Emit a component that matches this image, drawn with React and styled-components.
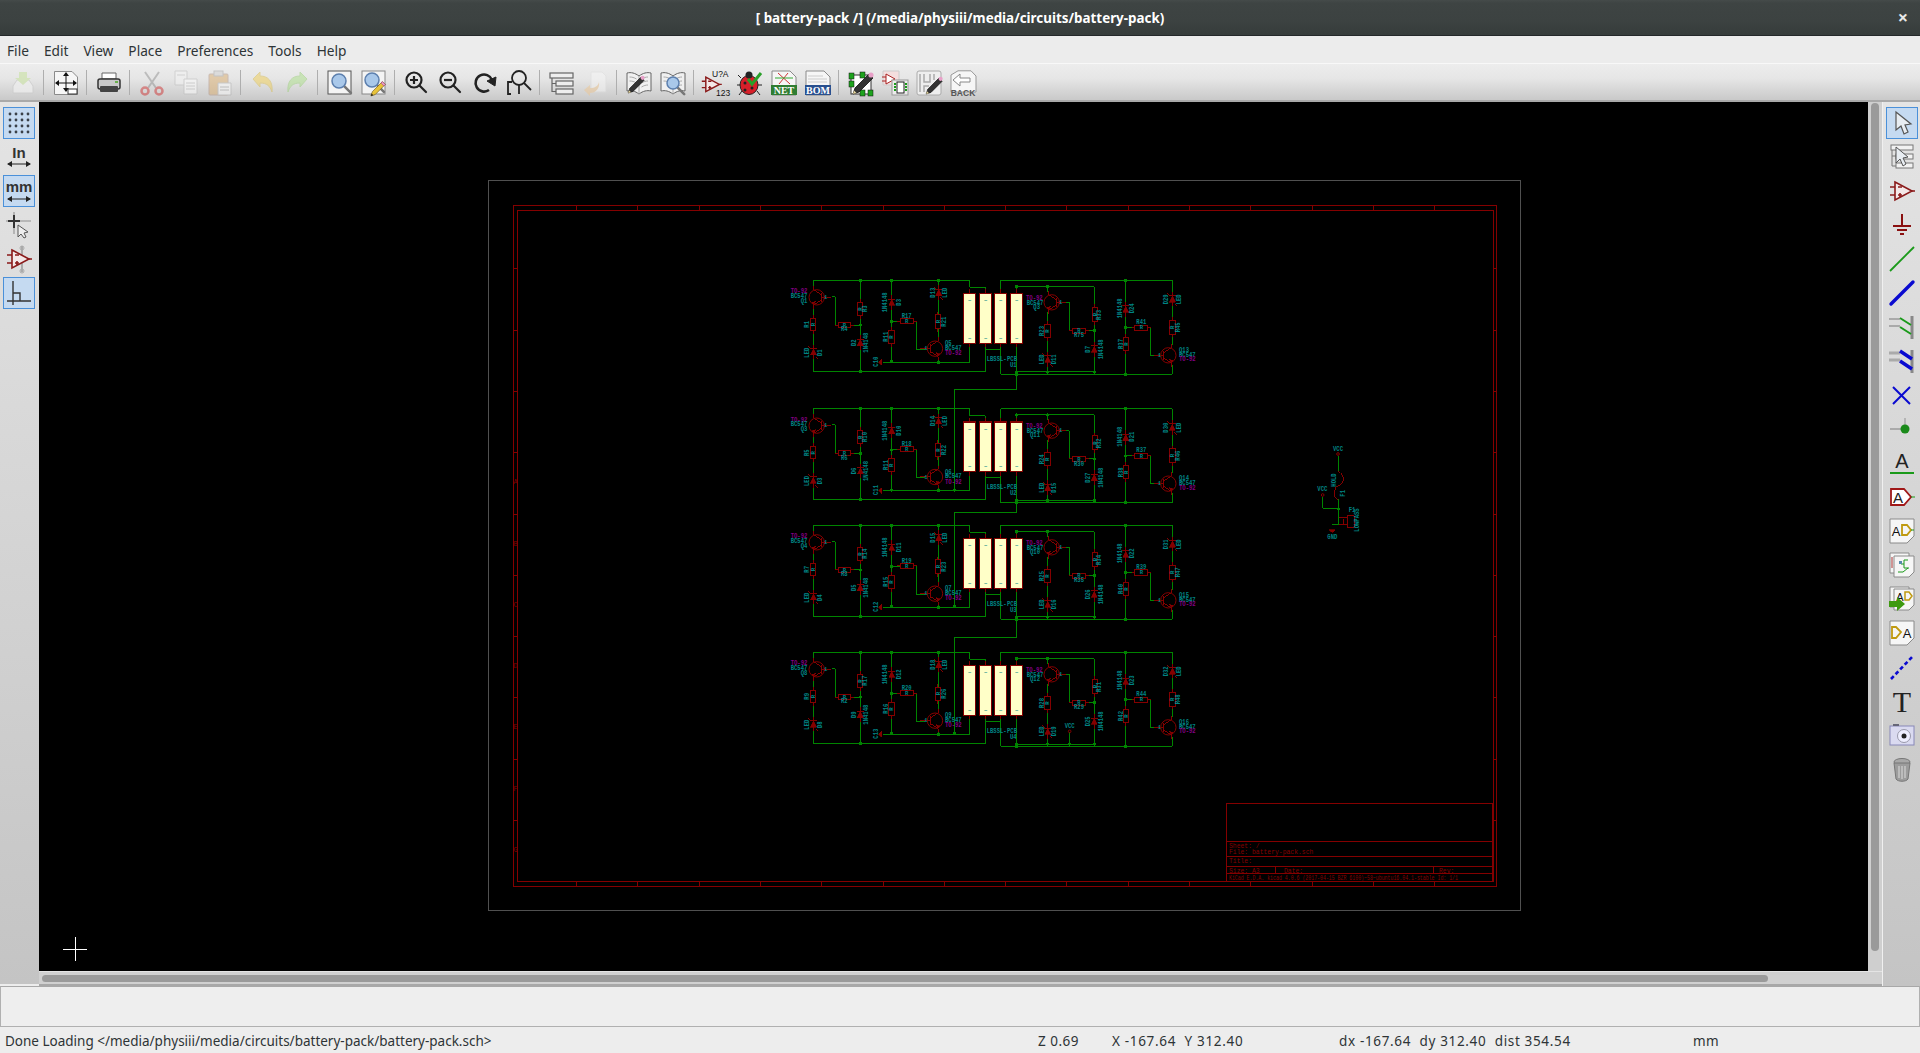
import React from 'react';
import styled, { createGlobalStyle } from 'styled-components';

const Global = createGlobalStyle`
  html, body { margin: 0; padding: 0; background: #ececec; }
  #root { width: 1920px; height: 1053px; overflow: hidden; }
`;

const Win = styled.div`
  width: 1920px; height: 1053px; display: flex; flex-direction: column;
  font-family: "Noto Sans", "Open Sans", sans-serif; color: #2e3436; background: #ededed;
`;
const TitleBar = styled.header`
  height: 36px; flex: none; display: flex; align-items: center; justify-content: center; position: relative;
  background: linear-gradient(#454b4a 0, #3e4443 3px, #3c4241 60%, #363c3b 100%);
  border-bottom: 1px solid #24282a; box-sizing: border-box;
  color: #fff; font-weight: 700; font-size: 13.4px;
`;
const CloseX = styled.span`
  position: absolute; right: 12px; top: 8px; font-size: 18px; line-height: 18px; color: #e8e8e8; font-weight: 700;
`;
const MenuBar = styled.nav`
  height: 27px; flex: none; display: flex; align-items: center; gap: 15px; background: #ececec; font-size: 13.7px; padding: 1px 0 0 7px; box-sizing: border-box;
`;
const MenuItem = styled.span``;
const Toolbar = styled.div`
  height: 39px; flex: none; box-sizing: border-box; display: flex; align-items: center; padding: 1px 0 0 6px;
  border-top: 1px solid #f8f8f8; border-bottom: 2px solid #a9a9a9;
  background: linear-gradient(#ededed, #e6e6e6 40%, #c9c9c9);
`;
const ToolBtn = styled.span`
  width: 26px; height: 26px; margin: 0 4px; flex: none; display: block;
`;
const Sep = styled.span`
  width: 1px; height: 25px; margin: 0 5px 0 3px; background: #aeaeae; flex: none;
`;
const Ico = styled.svg`
  display: block; width: 26px; height: 26px; overflow: visible;
  font-family: "Liberation Sans", sans-serif;
`;
const Main = styled.div`
  flex: none; height: 884px; display: flex;
`;
const SideBar = styled.aside`
  width: ${p => p.$w}px; flex: none; box-sizing: border-box; padding: 5px 0 0 3px;
  display: flex; flex-direction: column; gap: 2px;
  background: linear-gradient(#e4e4e4, #c4c4c4);
  border-left: ${p => p.$right ? '1px solid #f0f0f0' : '0'};
  margin-bottom: ${p => p.$right ? 0 : 2}px;
`;
const SideBtn = styled.span`
  width: 32px; height: 32px; flex: none; box-sizing: border-box; display: flex; align-items: center; justify-content: center;
  border: 1px solid ${p => p.$on ? '#4a90d9' : 'transparent'};
  background: ${p => p.$on ? '#c5daf1' : 'transparent'};
`;
const Center = styled.div`
  flex: 1; min-width: 0; display: flex; flex-direction: column;
`;
const CanvasRow = styled.div`
  flex: 1; min-height: 0; display: flex;
`;
const Canvas = styled.svg`
  flex: 1; min-width: 0; height: 869px; display: block; background: #000;
  font-family: "Liberation Mono", monospace;
`;
const VTrack = styled.div`
  width: 14px; flex: none; box-sizing: border-box; background: #cfcfcf; padding: 1px 3px 20px 3px;
`;
const VThumb = styled.div`
  width: 8px; height: 848px; border-radius: 4px; background: #9a9a9a;
`;
const HTrack = styled.div`
  height: 15px; flex: none; box-sizing: border-box; background: #d0d0d0; padding: 3px 0 0 3px;
  border-top: 1px solid #e4e4e4; border-bottom: 2px solid #a8a8a8;
`;
const HThumb = styled.div`
  width: 1726px; height: 7px; border-radius: 4px; background: #9a9a9a;
`;
const MsgPanel = styled.div`
  height: 41px; flex: none; box-sizing: border-box; background: #eeeeee; border: 1px solid #b0b0b0; border-top-color: #a8a8a8;
`;
const StatusBar = styled.footer`
  flex: none; height: 26px; display: flex; align-items: center; font-size: 13.5px; background: #ededed; color: #2e3436; padding: 1px 0 0 5px; box-sizing: border-box;
`;
const Cell = styled.span`
  width: ${p => p.$w}px; flex: none; white-space: pre; letter-spacing: ${p => p.$sp || 0}px;
`;

/* Schematic drawing parts */
const Wire = styled.path`fill: none; stroke: #008400; stroke-width: 3;`;
const Dot = styled.circle`fill: #008400;`;
const Red = styled.path`fill: none; stroke: #840000; stroke-width: 3;`;
const RedFill = styled.path`fill: #840000; stroke: #840000; stroke-width: 2;`;
const RedBox = styled.rect`fill: none; stroke: #840000; stroke-width: 3;`;
const RedRing = styled.circle`fill: none; stroke: #840000; stroke-width: 3; shape-rendering: geometricPrecision;`;
const Cell4 = styled.rect`fill: #ffffc8; stroke: #840000; stroke-width: 4;`;
const Lbl = styled.text`
  fill: ${p => p.$c || '#008484'}; font-size: ${p => p.$s || 19}px; font-weight: 700;
`;
const Frame = styled.rect`fill: none; stroke: ${p => p.$c}; stroke-width: 1; shape-rendering: crispEdges;`;
const Hair = styled.path`fill: none; stroke: ${p => p.$c || '#840000'}; stroke-width: 1; shape-rendering: crispEdges;`;
const Sheet = styled.text`fill: #840000; font-size: 6.4px; font-family: "Liberation Mono", monospace;`;

const T = ({ x, y, r, a, c, s, children }) => {
  const n = String(children).length;
  return (
    <Lbl x={x} y={y} $c={c} $s={s} textAnchor={a || (r ? 'middle' : 'start')} textLength={n * 10} lengthAdjust="spacingAndGlyphs"
      transform={r ? `rotate(-90 ${x} ${y})` : undefined}>{children}</Lbl>
  );
};
const ResV = ({ x, y, l = 40 }) => (
  <g>
    <RedBox x={x - 8} y={y} width={16} height={l} />
    <Red d={`M${x} ${y - 10}V${y}M${x} ${y + l}V${y + l + 10}`} />
    <T x={x + 5} y={y + l / 2} r s={15}>R</T>
  </g>
);
const ResH = ({ x, y, l = 40 }) => (
  <g>
    <RedBox x={x} y={y - 8} width={l} height={16} />
    <Red d={`M${x - 10} ${y}H${x}M${x + l} ${y}H${x + l + 10}`} />
    <T x={x + l / 2} y={y + 5} a="middle" s={15}>R</T>
  </g>
);
const Dio = ({ x, y, led }) => (
  <g>
    <RedFill d={`M${x - 9} ${y + 9}L${x} ${y - 9}L${x + 9} ${y + 9}Z`} />
    <Red d={`M${x - 10} ${y - 10}H${x + 10}M${x} ${y - 22}V${y + 22}`} />
    {led && <Red d={`M${x - 16} ${y - 18}L${x - 8} ${y - 10}M${x + 6} ${y + 14}L${x + 14} ${y + 22}`} />}
  </g>
);
const Qt = ({ cx, cy, d }) => (
  <g>
    <RedRing cx={cx} cy={cy} r={23} />
    <Red d={`M${cx + 14 * d} ${cy - 14}V${cy + 14}M${cx + 14 * d} ${cy - 8}L${cx - 10 * d} ${cy - 24}V${cy - 34}M${cx + 14 * d} ${cy + 8}L${cx - 10 * d} ${cy + 24}V${cy + 34}M${cx + 14 * d} ${cy}H${cx + 44 * d}`} />
    <RedFill d={`M${cx - 3 * d} ${cy + 12}l${-6 * d} 10l${-5 * d} -6Z`} />
    <T x={cx + 27 * d} y={cy + 5} a="middle" s={15}>1</T>
  </g>
);

const CELLS = [551, 599, 644, 692];
const JUNCTIONS = [[241, 31], [241, 165], [241, 304], [335, 31], [335, 155], [335, 275], [476, 31], [476, 277], [710, 50], [803, 50], [943, 182], [710, 306], [803, 306], [943, 306], [710, 313], [1037, 31], [1037, 173], [1037, 313]];
const WIRES = 'M100 31H569V52H616V70M100 31V58M100 110V145M100 182V225M100 268V304H617V238H662V220M662 238V313H1177M155 80H166V165H175M212 165H241M241 31V97M241 137V200M241 236V304M335 31V85M335 108V181M335 221V275M335 155H360M400 153H409V238H435M308 277H569V220M476 31V55M476 85V135M476 175V205M476 262V277M616 220V238M662 70V31H1177M710 70V50H943V113M943 155V220M943 256V306M803 50V65M803 125V163M803 203V245M803 290V306M840 97H868V182H877M917 182H943M710 220V313M710 306H943M1037 31V100M1037 136V202M1037 242V313M1037 173H1065M1103 173H1111V256H1137M1177 31V70M1177 105V152M1177 192V225M1177 285V313';

const ROWS = [
  { dy: 0, a: ['Q1', 'R1', 'D1', 'R4', 'R3', 'D2', 'D3', 'R11', 'R17', 'C10', 'D13', 'R21', 'Q5', 'U1', 'Q3', 'R23', 'D11', 'R33', 'R75', 'D7', 'D24', 'R41', 'R37', 'D29', 'R45', 'Q13'], link: null },
  { dy: 385, a: ['Q3', 'R5', 'D3', 'R6', 'R10', 'D6', 'D10', 'R11', 'R18', 'C11', 'D14', 'R22', 'Q6', 'U2', 'Q11', 'R24', 'D15', 'R32', 'R30', 'D27', 'D21', 'R37', 'R38', 'D30', 'R46', 'Q14'], link: -72, ly: -25 },
  { dy: 735, a: ['Q4', 'R7', 'D4', 'R8', 'R14', 'D5', 'D11', 'R15', 'R19', 'C12', 'D15', 'R23', 'Q7', 'U3', 'Q10', 'R25', 'D16', 'R34', 'R35', 'D26', 'D22', 'R39', 'R40', 'D31', 'R47', 'Q15'], link: -38, ly: -9 },
  { dy: 1116, a: ['Q8', 'R9', 'D8', 'R2', 'R17', 'D9', 'D12', 'R16', 'R20', 'C13', 'D18', 'R26', 'Q9', 'U4', 'Q12', 'R28', 'D19', 'R31', 'R29', 'D25', 'D23', 'R44', 'R42', 'D32', 'R48', 'Q16'], link: -68, ly: -14 },
];

const SchRow = ({ row, last }) => {
  const a = row.a;
  return (
    <g transform={`translate(0 ${row.dy})`} shapeRendering="crispEdges">
      {row.link !== null && <Wire d={`M710 ${row.link}V${row.ly}H523V275`} />}
      <Wire d={WIRES} />
      {JUNCTIONS.map(([x, y]) => <Dot key={`${x}-${y}`} cx={x} cy={y} r={5} />)}
      {row.link !== null && <Dot cx={523} cy={275} r={5} />}
      {last && <>
        <Wire d="M869 269V306" /><Dot cx={869} cy={306} r={5} />
        <RedRing cx={869} cy={268} r={4} />
        <T x={869} y={258} a="middle">VCC</T>
      </>}
      <Qt cx={110} cy={82} d={1} />
      <Qt cx={465} cy={236} d={-1} />
      <Qt cx={815} cy={97} d={1} />
      <Qt cx={1165} cy={256} d={-1} />
      <ResV x={100} y={145} l={37} /><ResH x={175} y={165} l={37} /><ResV x={241} y={97} /><ResV x={335} y={181} /><ResH x={360} y={153} /><ResV x={474} y={135} />
      <ResV x={803} y={163} /><ResV x={945} y={113} l={42} /><ResH x={877} y={182} /><ResH x={1065} y={173} l={38} /><ResV x={1038} y={202} /><ResV x={1178} y={152} />
      <Dio x={100} y={246} led /><Dio x={241} y={218} /><Dio x={335} y={97} /><Dio x={476} y={68} led />
      <Dio x={803} y={268} led /><Dio x={943} y={238} /><Dio x={1037} y={118} /><Dio x={1177} y={87} led />
      <RedFill d="M305 268L296 277L305 286Z" />
      {CELLS.map(x => (
        <g key={x}>
          <Cell4 x={x} y={71} width={36} height={149} />
          <Red d={`M${x + 18} 58V70M${x + 18} 221V232`} />
          <T x={x + 18} y={97} a="middle" s={14}>~</T>
          <T x={x + 18} y={210} a="middle" s={14}>~</T>
        </g>
      ))}
      <T x={82} y={70} a="end" c="#840084">TO-92</T><T x={82} y={84} a="end">BC547</T><T x={82} y={98} a="end">{a[0]}</T>
      <T x={88} y={163} r>{a[1]}</T>
      <T x={88} y={248} r>LED</T><T x={127} y={248} r>{a[2]}</T>
      <T x={193} y={184} a="middle">{a[3]}</T>
      <T x={262} y={116} r>{a[4]}</T>
      <T x={228} y={218} r>{a[5]}</T><T x={265} y={218} r>1N4148</T>
      <T x={322} y={97} r>1N4148</T><T x={363} y={97} r>{a[6]}</T>
      <T x={323} y={200} r>{a[7]}</T>
      <T x={380} y={143} a="middle">{a[8]}</T>
      <T x={295} y={275} r>{a[9]}</T>
      <T x={464} y={68} r>{a[10]}</T><T x={500} y={68} r>LED</T>
      <T x={497} y={155} r>{a[11]}</T>
      <T x={495} y={226} a="start">{a[12]}</T><T x={495} y={240} a="start">BC547</T><T x={495} y={256} a="start" c="#840084">TO-92</T>
      <T x={620} y={272} a="start">LBSSL-</T><T x={681} y={272} a="start">PCB</T><T x={700} y={290} a="middle">{a[13]}</T>
      <T x={738} y={89} a="start" c="#840084">TO-92</T><T x={740} y={104} a="start">BC547</T><T x={780} y={117} a="end">{a[14]}</T>
      <T x={793} y={183} r>{a[15]}</T><T x={793} y={268} r>LED</T><T x={828} y={268} r>{a[16]}</T>
      <T x={964} y={135} r>{a[17]}</T><T x={897} y={202} a="middle">{a[18]}</T>
      <T x={930} y={238} r>{a[19]}</T><T x={968} y={238} r>1N4148</T>
      <T x={1026} y={115} r>1N4148</T><T x={1063} y={115} r>{a[20]}</T>
      <T x={1084} y={162} a="middle">{a[21]}</T><T x={1029} y={222} r>{a[22]}</T>
      <T x={1164} y={88} r>{a[23]}</T><T x={1202} y={88} r>LED</T><T x={1200} y={172} r>{a[24]}</T>
      <T x={1197} y={246} a="start">{a[25]}</T><T x={1197} y={260} a="start">BC547</T><T x={1197} y={274} a="start" c="#840084">TO-92</T>
    </g>
  );
};

const hTicks = Array.from({ length: 15 }, (_, i) => 576 + i * 61.3).filter(x => x < 1490);
const vTicks = Array.from({ length: 11 }, (_, i) => 820 - i * 61.3).filter(y => y > 210);

const Schematic = () => (
  <Canvas viewBox="39 102 1829 869" preserveAspectRatio="none">
    <Frame $c="#505050" x={488.5} y={180.5} width={1032} height={730} />
    <Frame $c="#840000" x={513.5} y={205.5} width={983} height={681} />
    <Frame $c="#840000" x={517.5} y={210.5} width={976} height={671} />
    <Hair d={hTicks.map(x => `M${Math.round(x)}.5 206V210M${Math.round(x)}.5 882V887`).join('')} />
    <Hair d={vTicks.map(y => `M514 ${Math.round(y)}.5H517M1493 ${Math.round(y)}.5H1497`).join('')} />
    {vTicks.slice(0, 7).map((y, i) => <Sheet key={i} x={513.5} y={y + 32} textLength={4} lengthAdjust="spacingAndGlyphs">{'GFEDCBA'[i] || ''}</Sheet>)}
    <Frame $c="#840000" x={1226.5} y={803.5} width={266} height={78} />
    <Hair d="M1226 841.5H1493M1226 856.5H1493M1226 866.5H1493M1226 873.5H1493M1275.5 866V874M1433.5 866V874" />
    <Sheet x={1229} y={848}>Sheet: /</Sheet>
    <Sheet x={1229} y={854}>File: battery-pack.sch</Sheet>
    <Sheet x={1229} y={863}>Title:</Sheet>
    <Sheet x={1229} y={872.5}>Size: A3</Sheet>
    <Sheet x={1284} y={872.5}>Date:</Sheet>
    <Sheet x={1439} y={872.5}>Rev:</Sheet>
    <Sheet x={1229} y={879.5} textLength={229} lengthAdjust="spacingAndGlyphs">KiCad E.D.A.  kicad 4.0.6 (2017-04-15 BZR 6100)~58~ubuntu16.04.1-stable  Id: 1/1</Sheet>

    <g transform="translate(780 270) scale(0.3333333)">
      {ROWS.map((r, i) => <SchRow key={i} row={r} last={i === 3} />)}
    </g>
    <g transform="translate(1300 430) scale(0.3333333)" shapeRendering="crispEdges">
      <Wire d="M114 77V125M114 208V285M68 200V235H116M97 285H130" />
      <Dot cx={116} cy={237} r={5} />
      <RedRing cx={114} cy={72} r={4} /><RedRing cx={68} cy={195} r={4} />
      <Red d="M114 125C135 130 135 165 114 168C98 172 98 205 114 208M130 268V285M116 262H142M116 285H142M142 258H163V292H142Z" />
      <RedFill d="M88 300H106L97 308Z" />
      <T x={114} y={62} a="middle">VCC</T><T x={67} y={184} a="middle">VCC</T><T x={97} y={326} a="middle">GND</T>
      <T x={108} y={150} r>HOLD</T><T x={134} y={190} r>F1</T><T x={156} y={245} a="middle">F1</T><T x={176} y={270} r>LOWPASS</T>
    </g>
    <Hair $c="#fff" d="M63 949.5H87M75.5 937V961" />
  </Canvas>
);

/* Icons */
const Page = ({ d = 'M1.5 1.5H19L24.5 7V24.5H1.5Z' }) => <path d={d} fill="#f6f6f6" stroke="#8a8a8a" />;
const Lens = ({ x, y, r = 6 }) => (
  <g>
    <path d={`M${x + r * 0.7} ${y + r * 0.7}l7 7`} stroke="#777" strokeWidth="2.6" strokeLinecap="round" />
    <circle cx={x} cy={y} r={r} fill="#a9c8ea" stroke="#5c7fae" strokeWidth="1.5" />
  </g>
);
const Pencil = ({ x = 0, y = 0 }) => (
  <g transform={`translate(${x} ${y})`}>
    <path d="M20 5L24 9L10 23L4 25L6 19Z" fill="#e8c33a" stroke="#604a10" strokeWidth=".8" />
    <path d="M20 5L24 9L22 11L18 7Z" fill="#e8a0c8" stroke="#806" strokeWidth=".5" />
    <path d="M4 25L5 21.5L7.5 24Z" fill="#222" />
  </g>
);
const DarkPencil = ({ x = 0, y = 0 }) => (
  <g transform={`translate(${x} ${y})`}>
    <path d="M20 5L24 9L10 23L4 25L6 19Z" fill="#333" stroke="#111" strokeWidth=".8" />
    <circle cx="22" cy="6" r="2.6" fill="#e8a0c8" />
    <path d="M4 25L5 21.5L7.5 24Z" fill="#e8d8a0" />
  </g>
);
const Book = () => (
  <g>
    <path d="M13 6C9 3 5 2 1 3V21C5 20 9 21 13 24C17 21 21 20 25 21V3C21 2 17 3 13 6Z" fill="#f0f0f0" stroke="#666" />
    <path d="M13 6V24M3.5 7C6 7 8 7.5 10.5 9M3.5 11C6 11 8 11.5 10.5 13M22 7C20 7 18 7.5 15.5 9M22 11C20 11 18 11.5 15.5 13M22 15C20 15 18 15.5 15.5 17" fill="none" stroke="#aaa" />
  </g>
);
const OpAmp = ({ w = 1.6 }) => (
  <g fill="none" stroke="#8a1a1a" strokeWidth={w}>
    <path d="M6 4L23 13L6 22Z" fill="#f4e8e8" />
    <path d="M1 9H6M1 17H6M23 13H26M9 9H13M9 17H13M11 15V19" />
  </g>
);
const Zoomer = ({ children }) => (
  <g fill="none" stroke="#222" strokeWidth="2.2">
    <circle cx="10" cy="10" r="7.5" />
    <path d="M15.5 15.5L22 22" strokeLinecap="round" />
    {children}
  </g>
);

const TOP = [
  <g opacity=".75"><path d="M3 16L7 10H19L23 16V23H3Z" fill="#eee" stroke="#ccc" /><path d="M9 2H17V8H21L13 15L5 8H9Z" fill="#cfe3b0" /></g>,
  'sep',
  <><Page /><path d="M13 3V21M3 13H23" stroke="#111" strokeWidth="1" /><path d="M13 2L10 6H16ZM13 22L10 18H16ZM2 13L6 10V16ZM24 13L20 10V16Z" fill="#111" /><rect x="15" y="19" width="9" height="5" fill="#fff" stroke="#333" /></>,
  'sep',
  <><path d="M6 3H20V9H6Z" fill="#fff" stroke="#666" /><rect x="2" y="9" width="22" height="10" rx="2" fill="#c9c9c9" stroke="#333" strokeWidth="1.5" /><rect x="4" y="16" width="18" height="6" rx="1" fill="#444" /><rect x="19" y="11" width="3" height="2" fill="#6ab04c" /></>,
  'sep',
  <g opacity=".38"><path d="M6 2L17 18M20 2L9 18" stroke="#777" strokeWidth="2" /><circle cx="6" cy="21" r="3.5" fill="none" stroke="#c00" strokeWidth="2.5" /><circle cx="20" cy="21" r="3.5" fill="none" stroke="#c00" strokeWidth="2.5" /></g>,
  <g opacity=".5"><path d="M2 1H14V15H2Z" fill="#f4f4f4" stroke="#bbb" /><path d="M11 9H24V24H11Z" fill="#fff" stroke="#bbb" /><path d="M4 5H12M13 13H22M13 16H22M13 19H22" stroke="#bbb" /></g>,
  <g opacity=".45"><rect x="2" y="4" width="19" height="21" rx="1" fill="#d9a760" stroke="#a87" /><rect x="7" y="1" width="9" height="5" fill="#ccc" stroke="#999" /><path d="M11 13H24V25H11Z" fill="#fff" stroke="#aaa" /><path d="M13 17H22M13 20H22" stroke="#999" /></g>,
  'sep',
  <g opacity=".55"><path d="M3 9L10 2V6C18 6 23 11 22 22C20 16 17 13 10 13V17Z" fill="#f0d060" stroke="#d8c060" /></g>,
  <g opacity=".55"><path d="M23 9L16 2V6C8 6 3 11 4 22C6 16 9 13 16 13V17Z" fill="#b0e090" stroke="#a0d080" /></g>,
  'sep',
  <><rect x="1" y="1" width="23" height="23" fill="#f4f4f4" stroke="#555" /><Lens x={12} y={11} r={7} /></>,
  <><rect x="1" y="1" width="23" height="23" fill="#f4f4f4" stroke="#888" /><Lens x={11} y={10} r={7} /><g transform="translate(7 8) scale(.72)"><Pencil /></g></>,
  'sep',
  <Zoomer><path d="M6 10H14M10 6V14" /></Zoomer>,
  <Zoomer><path d="M6 10H14" /></Zoomer>,
  <g fill="none" stroke="#222" strokeWidth="2.6"><path d="M20 10A8.5 8.5 0 1 0 17 20" /><path d="M15 11L24 7L23 16Z" fill="#222" strokeWidth="1" /></g>,
  <g fill="none" stroke="#222" strokeWidth="1.8"><circle cx="13" cy="8" r="7" /><path d="M18 13L25 20" /><path d="M6 12H2V24H5M13 15V24" /></g>,
  'sep',
  <g fill="#eee" stroke="#666" strokeWidth="1.2"><rect x="1" y="3" width="23" height="5" /><rect x="7" y="11" width="17" height="5" /><rect x="7" y="19" width="17" height="5" /><path d="M3 8V21.5H7M3 13.5H7" fill="none" /></g>,
  <g opacity=".45"><path d="M8 2H19L23 6V22H8Z" fill="#f8f8f8" stroke="#ddd" /><path d="M1 20L7 15V18C12 18 15 16 16 12C17 18 13 23 7 23V26Z" fill="#f0c48a" /></g>,
  'sep',
  <><Book /><g transform="translate(-1 3) scale(.8)"><DarkPencil /></g></>,
  <><Book /><Lens x={13} y={13} r={6} /></>,
  'sep',
  <><g transform="translate(-2 4) scale(.8)"><OpAmp w={1.8} /></g><text x="9" y="7" fontSize="8.5" fill="#111">U?A</text><text x="13" y="26" fontSize="8.5" fill="#111">123</text></>,
  <><g stroke="#222" strokeWidth="1"><path d="M4 8L1 5M4 15H0M5 21L2 25M20 21L23 25M21 15H25" /></g><ellipse cx="12" cy="15" rx="9" ry="9.5" fill="#d8202a" stroke="#222" /><circle cx="12" cy="5" r="3.5" fill="#222" /><circle cx="8" cy="13" r="1.5" fill="#222" /><circle cx="15" cy="18" r="1.5" fill="#222" /><circle cx="8" cy="20" r="1.5" fill="#222" /><path d="M11 9L15 14L24 3" fill="none" stroke="#2aa02a" strokeWidth="3" /></>,
  <><Page d="M1 1H19L25 7V25H1Z" /><path d="M7 3L19 14M17 3L8 14" stroke="#c33" /><path d="M4 8H22" stroke="#3a3" /><rect x="0" y="15" width="26" height="10" fill="#2f7d32" /><text x="13" y="24" fontSize="10" fontWeight="700" fill="#fff" textAnchor="middle" fontFamily="Liberation Serif">NET</text></>,
  <><Page d="M1 1H19L25 7V25H1Z" /><path d="M3 6H18M3 9H22M3 12H22" stroke="#ccc" /><rect x="0" y="15" width="26" height="10" fill="#29508f" /><text x="13" y="24" fontSize="10" fontWeight="700" fill="#fff" textAnchor="middle" fontFamily="Liberation Serif">BOM</text></>,
  'sep',
  <><rect x="3" y="5" width="20" height="19" fill="#fff" stroke="#333" /><g fill="#1ea31e" stroke="#111" strokeWidth=".5"><rect x="1" y="3" width="5" height="6" /><rect x="12" y="2" width="5" height="6" /><rect x="1" y="11" width="5" height="6" /><rect x="20" y="20" width="5" height="6" /><rect x="12" y="20" width="5" height="6" /></g><DarkPencil x={1} y={-1} /></>,
  <><path d="M1 1H17V15H1Z" fill="#f4dede" stroke="#ccc" /><path d="M4 4L13 9L4 14Z" fill="#fff" stroke="#a22" /><path d="M0 7H4M0 11H4" stroke="#a22" /><rect x="10" y="10" width="16" height="15" fill="#ececec" stroke="#999" /><rect x="15" y="12" width="7" height="11" fill="#fff" stroke="#222" /><path d="M13 13V22M24 13V22" stroke="#1a9c1a" strokeWidth="2" strokeDasharray="2 1" /></>,
  <><rect x="1" y="1" width="24" height="24" rx="2" fill="#eee" stroke="#aaa" /><path d="M4 4V22M8 4V12H14V4M8 22V16H13M18 4V10" fill="none" stroke="#aaa" strokeWidth="1.5" /><g transform="translate(7 4) scale(.8)"><DarkPencil /></g></>,
  <><path d="M1 5L8 0.8H21L26 6V22H1Z" fill="#f6f6f6" stroke="#999" /><path d="M3 10L10 4V8H20V12H10V16Z" fill="#fff" stroke="#888" /><text x="13" y="26" fontSize="8.5" fontWeight="700" fill="#555" textAnchor="middle">BACK</text></>,
];

const LEFT = [
  { on: true, i: <g fill="#3a4048">{[4, 10, 16, 22].flatMap(x => [4, 10, 16, 22].map(y => <circle key={`${x}${y}`} cx={x} cy={y} r="1.4" />))}</g> },
  { i: <><text x="13" y="14" fontSize="15" fontWeight="700" fill="#333" textAnchor="middle">In</text><path d="M2 20H24" stroke="#222" /><path d="M1 20L6 17V23ZM25 20L20 17V23Z" fill="#222" /></> },
  { on: true, i: <><text x="13" y="14" fontSize="15" fontWeight="700" fill="#333" textAnchor="middle">mm</text><path d="M2 21H24" stroke="#222" /><path d="M1 21L6 18V24ZM25 21L20 18V24Z" fill="#222" /></> },
  { i: <><path d="M0 9H25M8 0V22" stroke="#aaa" strokeWidth="1.6" /><path d="M2 9H14M8 3V16" stroke="#333" strokeWidth="2" /><path d="M12 13V25L15 22L18 26L20 25L18 21L22 20Z" fill="#eee" stroke="#555" /></> },
  { i: <><path d="M16 0V26" stroke="#aaa" strokeWidth="2" /><circle cx="16" cy="2" r="2" fill="none" stroke="#aaa" /><circle cx="16" cy="25" r="2" fill="none" stroke="#aaa" /><OpAmp /></> },
  { on: true, i: <path d="M7 1V25M1 21H25M7 13H14V21" fill="none" stroke="#333" strokeWidth="1.4" /> },
];

const RIGHT = [
  { on: true, i: <path d="M7 2V20L12 16L15 24L19 22L16 15L22 14Z" fill="#e8edf2" stroke="#555" strokeWidth="1.2" /> },
  { i: <><g fill="#f2f2f2" stroke="#777"><rect x="2" y="1" width="22" height="5" /><rect x="7" y="10" width="17" height="5" /><rect x="7" y="19" width="17" height="5" /><path d="M3 6V22H7M3 12H7" fill="none" /></g><path d="M7 3V19L11 15L14 22L17 20L14 14L19 13Z" fill="#e8edf2" stroke="#555" /></> },
  { i: <OpAmp /> },
  { i: <path d="M13 2V14M4 14H22M8 18H18M11 22H15" fill="none" stroke="#8a1010" strokeWidth="2" /> },
  { i: <path d="M1 25L25 1" stroke="#1a9a1a" strokeWidth="1.8" /> },
  { i: <path d="M2 24L24 2" stroke="#0a0ad0" strokeWidth="3.4" strokeLinecap="round" /> },
  { i: <><path d="M0 5H11M0 12H11" stroke="#aaa" strokeWidth="2" /><path d="M23 2V25" stroke="#888" strokeWidth="3" /><path d="M11 4L22 11M11 13L22 20" stroke="#1a9a1a" strokeWidth="2" /></> },
  { i: <><path d="M0 5H11M0 12H11" stroke="#aaa" strokeWidth="3" /><path d="M23 2V25" stroke="#888" strokeWidth="3" /><path d="M11 3L23 11M11 13L23 21" stroke="#0a0ad0" strokeWidth="3.4" /></> },
  { i: <path d="M4 5L21 22M21 5L4 22" stroke="#0a0ad0" strokeWidth="2" /> },
  { i: <><path d="M1 13H14" stroke="#aaa" strokeWidth="2" /><path d="M16 2V12" stroke="#aaa" strokeWidth="1.5" /><circle cx="16" cy="13" r="4.5" fill="#1a8a1a" /></> },
  { i: <><text x="13" y="18" fontSize="20" fill="#222" textAnchor="middle">A</text><path d="M1 23H25" stroke="#1a9a1a" strokeWidth="2" /></> },
  { i: <><path d="M2 5H15L22 13L15 21H2Z" fill="#fff" stroke="#a01818" strokeWidth="1.8" /><path d="M22 13H26" stroke="#1a9a1a" /><text x="9" y="19" fontSize="15" fill="#222" textAnchor="middle">A</text></> },
  { i: <><Page d="M1 1H25V18L18 25H1Z" /><text x="7" y="18" fontSize="13" fill="#111" textAnchor="middle">A</text><path d="M13 7H18L22 12L18 17H13Z" fill="none" stroke="#c09a10" strokeWidth="1.8" /><path d="M22 12H25" stroke="#1a9a1a" /></> },
  { i: <><Page d="M1 1H20V21H1Z" /><Page d="M5 4H25V20L20 25H5Z" /><path d="M3 5V16" stroke="#a33" /><path d="M12 12H15V8H19M15 12V16H20M9 20H14L19 16" fill="none" stroke="#1a9a1a" /><rect x="10" y="9" width="3" height="3" fill="#58a" /></> },
  { i: <><Page d="M1 1H20V21H1Z" /><Page d="M5 3H25V19L20 24H5Z" /><text x="11" y="15" fontSize="11" fill="#111" textAnchor="middle">A</text><path d="M16 6H20L23 10L20 14H16Z" fill="none" stroke="#c09a10" strokeWidth="1.5" /><path d="M0 15H8V11L16 18L8 25V21H0Z" fill="#3e9a10" /></> },
  { i: <><Page d="M1 1H25V18L18 25H1Z" /><path d="M3 7H7L12 12L7 18H3Z" fill="none" stroke="#c09a10" strokeWidth="1.8" /><text x="18" y="18" fontSize="13" fill="#111" textAnchor="middle">A</text></> },
  { i: <path d="M2 25L24 2" stroke="#0a0ad0" strokeWidth="2.6" strokeDasharray="4 2.6" /> },
  { i: <text x="13" y="24" fontSize="30" fontFamily="Liberation Serif" fill="#222" textAnchor="middle">T</text> },
  { i: <><rect x="1" y="4" width="24" height="19" fill="#dadaf0" stroke="#8888b8" /><rect x="4" y="2" width="6" height="2" fill="#667" /><circle cx="15" cy="14" r="6.5" fill="#eef" stroke="#99a" /><circle cx="15" cy="14" r="2.5" fill="#222" /></> },
  { i: <><ellipse cx="13" cy="6" rx="8" ry="3.5" fill="#a8a8a8" stroke="#777" /><path d="M5 7L7 23C9 26 17 26 19 23L21 7Z" fill="#9c9c9c" stroke="#777" /><path d="M10 10V22M13 10V23M16 10V22" stroke="#dcdcdc" /></> },
];

const MENU = ['File', 'Edit', 'View', 'Place', 'Preferences', 'Tools', 'Help'];

export default function App() {
  return (
    <Win>
      <Global />
      <TitleBar>[ battery-pack /] (/media/physiii/media/circuits/battery-pack)<CloseX>×</CloseX></TitleBar>
      <MenuBar>{MENU.map(m => <MenuItem key={m}>{m}</MenuItem>)}</MenuBar>
      <Toolbar>
        {TOP.map((t, i) => t === 'sep'
          ? <Sep key={i} />
          : <ToolBtn key={i}><Ico viewBox="0 0 26 26">{t}</Ico></ToolBtn>)}
      </Toolbar>
      <Main>
        <SideBar $w={39}>
          {LEFT.map((b, i) => <SideBtn key={i} $on={b.on}><Ico viewBox="0 0 26 26">{b.i}</Ico></SideBtn>)}
        </SideBar>
        <Center>
          <CanvasRow>
            <Schematic />
            <VTrack><VThumb /></VTrack>
          </CanvasRow>
          <HTrack><HThumb /></HTrack>
        </Center>
        <SideBar $w={38} $right>
          {RIGHT.map((b, i) => <SideBtn key={i} $on={b.on}><Ico viewBox="0 0 26 26">{b.i}</Ico></SideBtn>)}
        </SideBar>
      </Main>
      <MsgPanel />
      <StatusBar>
        <Cell $w={1033}>Done Loading &lt;/media/physiii/media/circuits/battery-pack/battery-pack.sch&gt;</Cell>
        <Cell $w={74} $sp={0.5}>Z 0.69</Cell>
        <Cell $w={227} $sp={0.68}>X -167.64  Y 312.40</Cell>
        <Cell $w={354} $sp={0.66}>dx -167.64  dy 312.40  dist 354.54</Cell>
        <Cell $w={100} $sp={0.4}>mm</Cell>
      </StatusBar>
    </Win>
  );
}
